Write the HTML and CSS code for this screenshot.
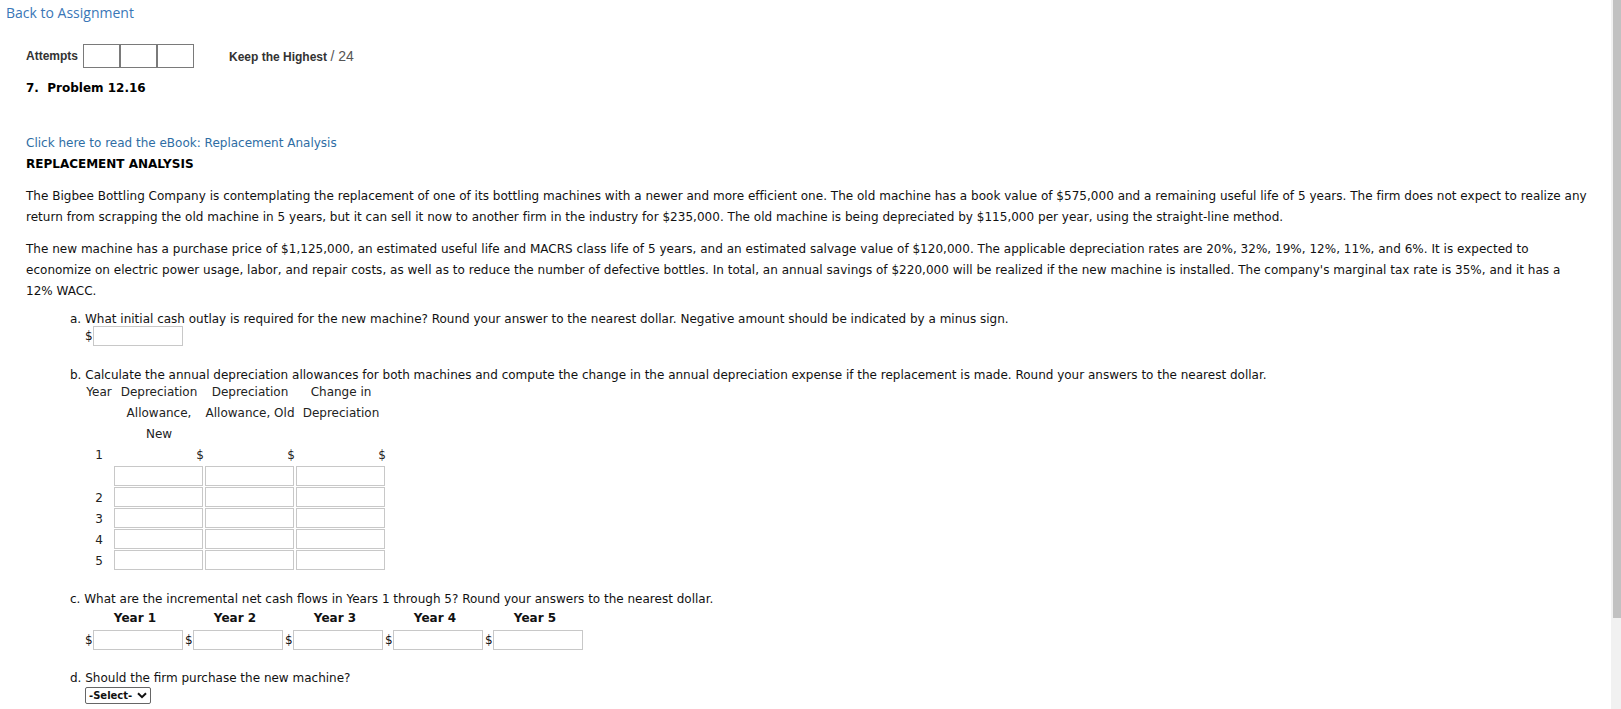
FILE: index.html
```html
<!DOCTYPE html>
<html>
<head>
<meta charset="utf-8">
<title>Problem 12.16</title>
<link rel="stylesheet" href="styles.css">
</head>
<body>
<div class="page">
  <a class="back" href="#">Back to Assignment</a>

  <div class="meta">
    <div class="attempts">
      <span class="att-label">Attempts</span>
      <span class="att-boxes"><span class="att-box"></span><span class="att-box"></span><span class="att-box"></span></span>
      <span class="keep">Keep the Highest <span class="score">/ 24</span></span>
    </div>
    <div class="title">7.&nbsp; Problem 12.16</div>
  </div>

  <div class="content">
    <a class="ebook" href="#">Click here to read the eBook: Replacement Analysis</a>
    <div class="heading">REPLACEMENT ANALYSIS</div>
    <p class="para">The Bigbee Bottling Company is contemplating the replacement of one of its bottling machines with a newer and more efficient one. The old machine has a book value of $575,000 and a remaining useful life of 5 years. The firm does not expect to realize any<br>return from scrapping the old machine in 5 years, but it can sell it now to another firm in the industry for $235,000. The old machine is being depreciated by $115,000 per year, using the straight-line method.</p>
    <p class="para">The new machine has a purchase price of $1,125,000, an estimated useful life and MACRS class life of 5 years, and an estimated salvage value of $120,000. The applicable depreciation rates are 20%, 32%, 19%, 12%, 11%, and 6%. It is expected to<br>economize on electric power usage, labor, and repair costs, as well as to reduce the number of defective bottles. In total, an annual savings of $220,000 will be realized if the new machine is installed. The company's marginal tax rate is 35%, and it has a<br>12% WACC.</p>

    <div class="q q-a">
      <div class="q-text">a. What initial cash outlay is required for the new machine? Round your answer to the nearest dollar. Negative amount should be indicated by a minus sign.</div>
      <div class="q-body money"><span class="dollar">$</span><input class="field" type="text"></div>
    </div>

    <div class="q q-b">
      <div class="q-text">b. Calculate the annual depreciation allowances for both machines and compute the change in the annual depreciation expense if the replacement is made. Round your answers to the nearest dollar.</div>
      <table class="q-body dep">
        <thead>
          <tr>
            <th class="yr">Year</th>
            <th class="col">Depreciation<br>Allowance,<br>New</th>
            <th class="col">Depreciation<br>Allowance, Old</th>
            <th class="col">Change in<br>Depreciation</th>
          </tr>
        </thead>
        <tbody>
          <tr class="first">
            <td class="yr">1</td>
            <td class="col"><div class="cur">$</div><input class="field" type="text"></td>
            <td class="col"><div class="cur">$</div><input class="field" type="text"></td>
            <td class="col"><div class="cur">$</div><input class="field" type="text"></td>
          </tr>
          <tr>
            <td class="yr">2</td>
            <td class="col"><input class="field" type="text"></td>
            <td class="col"><input class="field" type="text"></td>
            <td class="col"><input class="field" type="text"></td>
          </tr>
          <tr>
            <td class="yr">3</td>
            <td class="col"><input class="field" type="text"></td>
            <td class="col"><input class="field" type="text"></td>
            <td class="col"><input class="field" type="text"></td>
          </tr>
          <tr>
            <td class="yr">4</td>
            <td class="col"><input class="field" type="text"></td>
            <td class="col"><input class="field" type="text"></td>
            <td class="col"><input class="field" type="text"></td>
          </tr>
          <tr>
            <td class="yr">5</td>
            <td class="col"><input class="field" type="text"></td>
            <td class="col"><input class="field" type="text"></td>
            <td class="col"><input class="field" type="text"></td>
          </tr>
        </tbody>
      </table>
    </div>

    <div class="q q-c">
      <div class="q-text">c. What are the incremental net cash flows in Years 1 through 5? Round your answers to the nearest dollar.</div>
      <table class="q-body flows">
        <thead>
          <tr><th>Year 1</th><th>Year 2</th><th>Year 3</th><th>Year 4</th><th>Year 5</th></tr>
        </thead>
        <tbody>
          <tr>
            <td><div class="money"><span class="dollar">$</span><input class="field" type="text"></div></td>
            <td><div class="money"><span class="dollar">$</span><input class="field" type="text"></div></td>
            <td><div class="money"><span class="dollar">$</span><input class="field" type="text"></div></td>
            <td><div class="money"><span class="dollar">$</span><input class="field" type="text"></div></td>
            <td><div class="money"><span class="dollar">$</span><input class="field" type="text"></div></td>
          </tr>
        </tbody>
      </table>
    </div>

    <div class="q q-d">
      <div class="q-text">d. Should the firm purchase the new machine?</div>
      <div class="q-body">
        <span class="select">-Select-<svg class="chev" width="10" height="7" viewBox="0 0 10 7"><path d="M1 1.2 L5 5.2 L9 1.2" fill="none" stroke="#111" stroke-width="2"/></svg></span>
      </div>
    </div>
  </div>

  <div class="scrollbar"><div class="thumb"></div></div>
</div>
</body>
</html>
```

FILE: styles.css
```css
html, body {
  margin: 0;
  padding: 0;
  overflow: hidden;
  background: #ffffff;
}

body {
  font-family: Verdana, "DejaVu Sans", sans-serif;
  font-size: 12px;
  color: #111111;
}

.back {
  display: block;
  font-family: "Open Sans", "DejaVu Sans", sans-serif;
  font-size: 14px;
  line-height: 19px;
  padding: 3px 0 0 6px;
  color: #3a77b7;
  text-decoration: none;
}

.meta {
  padding-left: 26px;
  margin-top: 22px;
}

.attempts {
  display: flex;
  align-items: center;
  height: 24px;
  font-family: Arial, "Liberation Sans", sans-serif;
  font-size: 12px;
  color: #333333;
}

.att-label {
  font-weight: bold;
  margin-right: 5px;
}

.att-boxes {
  display: flex;
}

.att-box {
  width: 35px;
  height: 22px;
  border: 1px solid #7a7a7a;
}

.keep {
  margin-left: 35px;
  font-weight: bold;
}

.score {
  font-weight: normal;
  font-size: 14px;
  color: #555555;
}

.title {
  margin-top: 13px;
  font-weight: bold;
  line-height: 14px;
  color: #000000;
}

.content {
  padding-left: 26px;
  margin-top: 38px;
}

.ebook {
  display: block;
  line-height: 21px;
  color: #2e6da4;
  text-decoration: none;
}

.heading {
  font-weight: bold;
  line-height: 21px;
  color: #000000;
}

.para {
  margin: 11px 0 0;
  line-height: 21px;
  white-space: nowrap;
  letter-spacing: 0.02px;
}

.q {
  margin-left: 44px;
}

.q-text {
  line-height: 14px;
}

.q-body {
  margin-left: 15px;
}

.q-a { margin-top: 10px; }
.q-b { margin-top: 22px; }
.q-c { margin-top: 21px; }
.q-d { margin-top: 21px; }

.money {
  display: flex;
  align-items: center;
  height: 20px;
}

.dollar {
  width: 8px;
  flex: none;
}

.field {
  display: block;
  flex: none;
  box-sizing: border-box;
  width: 90px;
  height: 20px;
  margin: 0;
  padding: 0 2px;
  border: 1px solid #c8c8c8;
  background: #ffffff;
  font: inherit;
  outline: none;
}

/* b. depreciation table */
.dep {
  border-collapse: collapse;
  border-spacing: 0;
  color: #222222;
}

.dep th {
  font-weight: normal;
  line-height: 21px;
  vertical-align: top;
  padding: 0;
  text-align: center;
  white-space: nowrap;
}

.dep .yr {
  width: 28px;
  padding: 0;
  text-align: center;
}

.dep th.col,
.dep td.col {
  width: 90px;
  padding: 0 0 0 1px;
}

.dep td {
  padding: 0;
  vertical-align: middle;
}

.dep td .field {
  width: 89px;
  margin-bottom: 1px;
}

.dep tr.first td {
  vertical-align: top;
  line-height: 21px;
}

.cur {
  text-align: right;
  line-height: 21px;
}

/* c. cash flow table */
.flows {
  border-collapse: collapse;
  border-spacing: 0;
}

.flows th {
  width: 100px;
  padding: 0;
  line-height: 24px;
  font-weight: bold;
  color: #111111;
  text-align: center;
}

.flows td {
  padding: 0;
}

/* d. select */
.select {
  display: inline-flex;
  align-items: center;
  box-sizing: border-box;
  height: 17px;
  margin-top: 2px;
  padding: 0 3px 0 3px;
  border: 1px solid #666666;
  border-radius: 2px;
  font-size: 10px;
  font-weight: bold;
  color: #111111;
  background: #ffffff;
}

.chev {
  margin-left: 5px;
}

/* scrollbar */
.scrollbar {
  position: fixed;
  top: 0;
  right: 0;
  width: 10px;
  height: 100%;
  background: #f1f1f1;
}

.thumb {
  margin-left: 2px;
  width: 8px;
  height: 618px;
  background: #c1c1c1;
}
```
